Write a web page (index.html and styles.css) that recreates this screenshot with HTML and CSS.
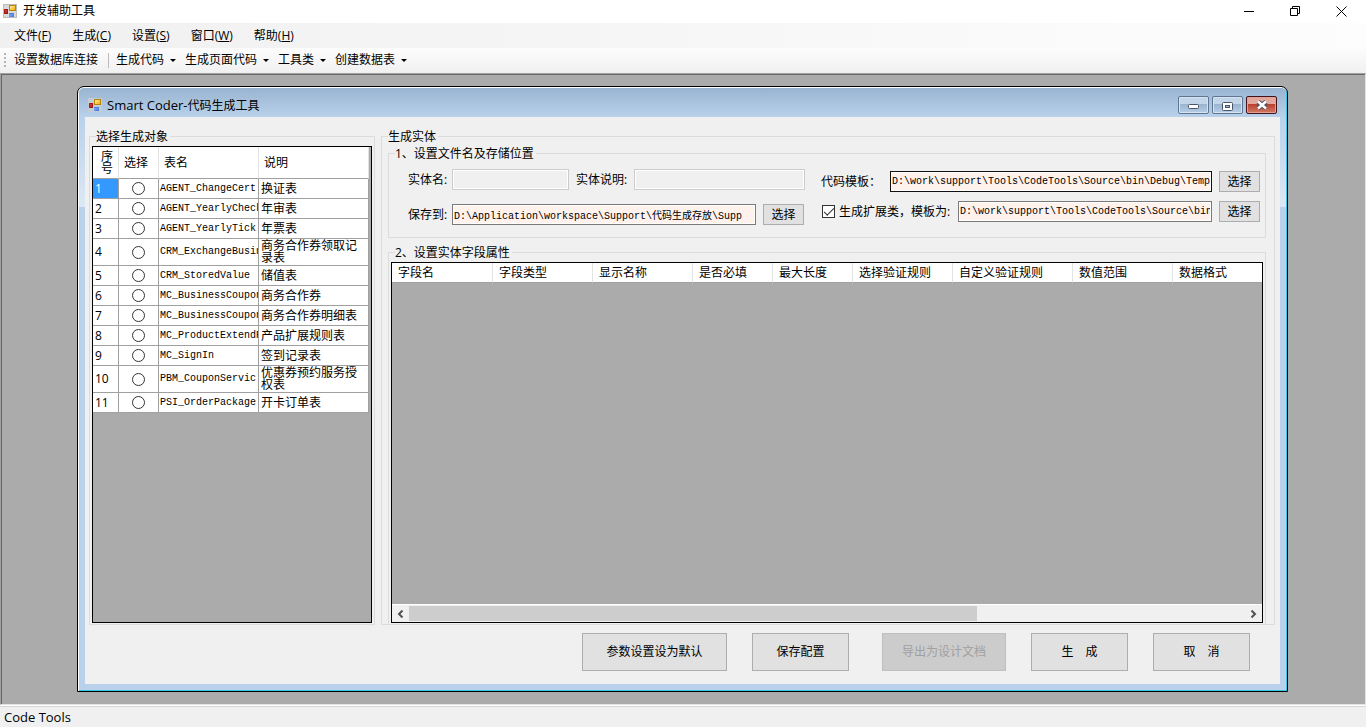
FILE: index.html
```html
<!DOCTYPE html>
<html lang="zh-CN">
<head>
<meta charset="utf-8">
<title>开发辅助工具</title>
<link rel="stylesheet" href="styles.css">
</head>
<body class="app">
<svg class="defs" aria-hidden="true">
  <defs>
    <linearGradient id="gold" x2="1" y2="1"><stop offset="0" stop-color="#fff3a8"/><stop offset="1" stop-color="#f0a800"/></linearGradient>
    <linearGradient id="red" x2="1" y2="1"><stop offset="0" stop-color="#e8554a"/><stop offset="1" stop-color="#a30e0e"/></linearGradient>
    <linearGradient id="blue" x2="1" y2="1"><stop offset="0" stop-color="#8cb8ff"/><stop offset="1" stop-color="#3a74d8"/></linearGradient>
    <symbol id="form-icon" viewBox="0 0 14 14">
      <rect x="1" y="5" width="4" height="5" fill="url(#red)"/>
      <path d="M1.500 5.500h3v4h-3z" fill="none" stroke="#a01818"/>
      <rect x="6.500" y="1.500" width="6" height="5" fill="url(#gold)" stroke="#b98208"/>
      <rect x="6" y="9" width="5" height="4" fill="url(#blue)"/>
      <path d="M6 9.500h5" stroke="#4a7fd6"/>
    </symbol>
  </defs>
</svg>

<header class="titlebar">
  <svg class="form-icon form-icon-boxed"><use href="#form-icon"/></svg>
  <h1 class="titlebar-text">开发辅助工具</h1>
  <div class="caption-buttons">
    <button class="caption-button" aria-label="最小化"><svg width="11" height="11" viewBox="0 0 11 11"><path d="M0 5.5h10" stroke="#000"/></svg></button>
    <button class="caption-button" aria-label="还原"><svg width="11" height="11" viewBox="0 0 11 11" fill="none" stroke="#000"><path d="M.5 2.5h7v7h-7z M2.5 2.5v-2h7v7h-2"/></svg></button>
    <button class="caption-button" aria-label="关闭"><svg width="11" height="11" viewBox="0 0 11 11"><path d="M.5.5l10 10M10.5.5l-10 10" stroke="#000"/></svg></button>
  </div>
</header>

<nav class="menubar">
  <button class="menu-item">文件(<u>F</u>)</button>
  <button class="menu-item">生成(<u>C</u>)</button>
  <button class="menu-item">设置(<u>S</u>)</button>
  <button class="menu-item">窗口(<u>W</u>)</button>
  <button class="menu-item">帮助(<u>H</u>)</button>
</nav>

<div class="toolbar">
  <span class="grip"></span>
  <button class="tool">设置数据库连接</button>
  <span class="tool-separator"></span>
  <button class="tool">生成代码<span class="caret"></span></button>
  <button class="tool">生成页面代码<span class="caret"></span></button>
  <button class="tool">工具类<span class="caret"></span></button>
  <button class="tool">创建数据表<span class="caret"></span></button>
</div>

<main class="mdi">
  <section class="window">
    <header class="window-title">
      <svg class="form-icon"><use href="#form-icon"/></svg>
      <h2 class="window-text"><span class="latin">Smart Coder-</span>代码生成工具</h2>
      <div class="glass-buttons">
        <button class="glass-button" aria-label="最小化"><svg width="11" height="5" viewBox="0 0 11 5"><rect x=".5" y=".5" width="10" height="4" rx="1" fill="#fff" stroke="#4a5468"/></svg></button>
        <button class="glass-button" aria-label="最大化"><svg width="11" height="9" viewBox="0 0 11 9"><rect x=".5" y=".5" width="10" height="8" rx="1" fill="#fff" stroke="#4a5468"/><rect x="3.5" y="3.5" width="4" height="2" fill="#9db5cf" stroke="#4a5468"/></svg></button>
        <button class="glass-button glass-close" aria-label="关闭"><svg width="12" height="10" viewBox="0 0 12 10"><path d="M2 2l8 6M10 2l-8 6" stroke="#4a5468" stroke-width="5"/><path d="M2 1.500l8 7M10 1.500l-8 7" stroke="#fff" stroke-width="2.500"/></svg></button>
      </div>
    </header>

    <div class="window-body">
      <div class="panes">
        <fieldset class="group source-group">
          <legend>选择生成对象</legend>
          <div class="grid-view">
            <table class="object-table">
              <colgroup><col class="col-no"><col class="col-pick"><col class="col-name"><col class="col-desc"></colgroup>
              <thead><tr><th class="no-head">序号</th><th>选择</th><th>表名</th><th>说明</th></tr></thead>
              <tbody>
                <tr><td class="selected">1</td><td class="pick"><input type="radio" name="obj" aria-label="换证表"></td><td class="code">AGENT_ChangeCert</td><td>换证表</td></tr>
                <tr><td>2</td><td class="pick"><input type="radio" name="obj" aria-label="年审表"></td><td class="code">AGENT_YearlyCheck</td><td>年审表</td></tr>
                <tr><td>3</td><td class="pick"><input type="radio" name="obj" aria-label="年票表"></td><td class="code">AGENT_YearlyTick</td><td>年票表</td></tr>
                <tr class="tall"><td>4</td><td class="pick"><input type="radio" name="obj" aria-label="商务合作券领取记录表"></td><td class="code">CRM_ExchangeBusin</td><td>商务合作券领取记录表</td></tr>
                <tr><td>5</td><td class="pick"><input type="radio" name="obj" aria-label="储值表"></td><td class="code">CRM_StoredValue</td><td>储值表</td></tr>
                <tr><td>6</td><td class="pick"><input type="radio" name="obj" aria-label="商务合作券"></td><td class="code">MC_BusinessCoupon</td><td>商务合作券</td></tr>
                <tr><td>7</td><td class="pick"><input type="radio" name="obj" aria-label="商务合作券明细表"></td><td class="code">MC_BusinessCoupon</td><td>商务合作券明细表</td></tr>
                <tr><td>8</td><td class="pick"><input type="radio" name="obj" aria-label="产品扩展规则表"></td><td class="code">MC_ProductExtendR</td><td>产品扩展规则表</td></tr>
                <tr><td>9</td><td class="pick"><input type="radio" name="obj" aria-label="签到记录表"></td><td class="code">MC_SignIn</td><td>签到记录表</td></tr>
                <tr class="tall"><td>10</td><td class="pick"><input type="radio" name="obj" aria-label="优惠券预约服务授权表"></td><td class="code">PBM_CouponServic</td><td>优惠券预约服务授权表</td></tr>
                <tr><td>11</td><td class="pick"><input type="radio" name="obj" aria-label="开卡订单表"></td><td class="code">PSI_OrderPackage</td><td>开卡订单表</td></tr>
              </tbody>
            </table>
          </div>
        </fieldset>

        <fieldset class="group entity-group">
          <legend>生成实体</legend>
          <fieldset class="group file-group">
            <legend>1、设置文件名及存储位置</legend>
            <div class="file-columns">
              <div class="file-left">
                <div class="field-row">
                  <label class="short-label" for="entity">实体名:</label>
                  <input class="text-box entity-box" id="entity" type="text" disabled>
                  <label class="desc-label" for="entity-desc">实体说明:</label>
                  <input class="text-box fill" id="entity-desc" type="text" disabled>
                </div>
                <div class="field-row">
                  <label class="short-label" for="save">保存到:</label>
                  <input class="text-box fill" id="save" type="text" value="D:\Application\workspace\Support\代码生成存放\Supp">
                  <button class="button pick-button">选择</button>
                </div>
              </div>
              <div class="file-right">
                <div class="field-row">
                  <label class="template-label" for="template">代码模板：</label>
                  <input class="text-box fill active" id="template" type="text" value="D:\work\support\Tools\CodeTools\Source\bin\Debug\Temp">
                  <button class="button pick-button">选择</button>
                </div>
                <div class="field-row">
                  <label class="check-label"><input class="check" type="checkbox" checked>生成扩展类，模板为:</label>
                  <input class="text-box fill" type="text" aria-label="扩展类模板" value="D:\work\support\Tools\CodeTools\Source\bin">
                  <button class="button pick-button">选择</button>
                </div>
              </div>
            </div>
          </fieldset>

          <fieldset class="group fields-group">
            <legend>2、设置实体字段属性</legend>
            <div class="grid-view">
              <div class="fields-scroll">
                <table class="fields-table">
                  <colgroup><col class="w101"><col class="w100"><col class="w100"><col class="w80"><col class="w80"><col class="w100"><col class="w120"><col class="w100"><col></colgroup>
                  <thead><tr><th>字段名</th><th>字段类型</th><th>显示名称</th><th>是否必填</th><th>最大长度</th><th>选择验证规则</th><th>自定义验证规则</th><th>数值范围</th><th>数据格式</th></tr></thead>
                </table>
              </div>
              <div class="scrollbar">
                <button class="scroll-button" aria-label="向左滚动"><svg width="7" height="8" viewBox="0 0 7 8"><path d="M5.5 .5L2 4l3.500 3.500" fill="none" stroke="#505050" stroke-width="2"/></svg></button>
                <div class="scroll-track"><div class="scroll-thumb"></div></div>
                <button class="scroll-button" aria-label="向右滚动"><svg width="7" height="8" viewBox="0 0 7 8"><path d="M1.500 .5L5 4 1.500 7.500" fill="none" stroke="#505050" stroke-width="2"/></svg></button>
              </div>
            </div>
          </fieldset>
        </fieldset>
      </div>

      <footer class="actions">
        <button class="button action wide">参数设置设为默认</button>
        <button class="button action">保存配置</button>
        <button class="button action export" disabled>导出为设计文档</button>
        <button class="button action">生　成</button>
        <button class="button action">取　消</button>
      </footer>
    </div>
  </section>
</main>

<footer class="statusbar">Code Tools</footer>
</body>
</html>
```
FILE: styles.css
```css
* { box-sizing: border-box; }

.app {
  margin: 0;
  height: 100vh;
  display: flex;
  flex-direction: column;
  overflow: hidden;
  background: #f0f0f0;
  color: #000;
  font: 12px/16px "Open Sans", "Noto Sans CJK SC", sans-serif;
}

.defs { position: absolute; width: 0; height: 0; }

button, input {
  font: inherit;
  color: inherit;
  margin: 0;
  padding: 0;
  border: 0;
  border-radius: 0;
  background: none;
}

/* Main window chrome */
.titlebar {
  display: flex;
  align-items: center;
  height: 23px;
  padding: 0 2px 1px 3px;
  background: #fff;
}
.form-icon { width: 14px; height: 14px; flex: none; background: #c3cbd4; }
.form-icon-boxed { background: #d9d9d9; outline: 1px solid #bdbdbd; outline-offset: -1px; }
.titlebar-text { flex: 1; margin: 0 0 0 6px; font-size: 12px; font-weight: 400; }
.caption-buttons { display: flex; }
.caption-button { width: 46px; height: 20px; display: grid; place-items: center; }

.menubar {
  display: flex;
  gap: 21px;
  height: 25px;
  padding-left: 14px;
  background: linear-gradient(90deg, #f0f0f0, #fdfdfd);
}

.toolbar {
  display: flex;
  align-items: center;
  height: 25px;
  padding: 0 0 1px 4px;
  background: linear-gradient(#fdfdfd, #f0f0f0);
}
.grip {
  width: 2px;
  height: 14px;
  margin-right: 8px;
  background: repeating-linear-gradient(#b4b4b4 0 2px, transparent 2px 4px);
}
.tool { display: flex; align-items: center; margin-right: 9px; }
.tool-separator { width: 1px; height: 15px; margin: 0 7px 0 1px; background: #bdbdbd; }
.caret {
  margin-left: 6px;
  border: 3px solid transparent;
  border-top-color: #000;
  border-bottom: 0;
}

.mdi {
  position: relative;
  flex: 1;
  min-height: 0;
  border: 1px solid #a0a0a0;
  border-right-color: #e3e3e3;
  border-bottom-color: #e3e3e3;
  background: #ababab;
  box-shadow: inset 1px 1px #696969;
}
.statusbar {
  height: 22px;
  padding: 3px 4px 0;
  border-top: 1px solid #fff;
  box-shadow: inset 0 1px #d7d7d7;
  font-size: 13px;
}

/* Child window */
.window {
  position: absolute;
  inset: 12px 77px 12px 76px;
  display: flex;
  flex-direction: column;
  padding: 1px;
  border: 1px solid #000;
  border-radius: 7px 7px 0 0;
  background:
    linear-gradient(#b9d1ea, #dce8f5) 0 30px / 100% 90px no-repeat,
    #b9d1ea;
  box-shadow: inset 1px 1px #fff, inset -1px -1px #35c8e8;
}
.window-title {
  display: flex;
  align-items: center;
  height: 29px;
  padding: 5px 9px 0 9px;
  border-radius: 5px 5px 0 0;
  background: linear-gradient(#99b4d1, #b9d1ea);
}
.window-text { flex: 1; margin: 0 0 0 5px; font-size: 12px; font-weight: 400; }
.latin { font-size: 13px; }
.glass-buttons { display: flex; gap: 3px; }
.glass-button {
  width: 31px;
  height: 18px;
  display: grid;
  place-items: center;
  padding-top: 2px;
  border: 1px solid #5f7590;
  border-radius: 2px;
  background: linear-gradient(#c3d6e9 45%, #9ab4cf 45%, #b6cfe6);
  box-shadow: inset 0 0 0 1px #d5e4f2;
}
.glass-close {
  padding-top: 0;
  border-color: #43141c;
  background: linear-gradient(#e3a79c 45%, #b9402c 45%, #d27b66);
  box-shadow: inset 0 0 0 1px #e0a297;
}

.window-body {
  flex: 1;
  min-height: 0;
  display: flex;
  flex-direction: column;
  margin: 0 6px 6px;
  padding: 11px 5px 0 4px;
  background: #f0f0f0;
}
.panes { flex: 1; min-height: 0; display: flex; gap: 6px; }

.group {
  display: flex;
  flex-direction: column;
  min-width: 0;
  min-height: 0;
  margin: 0;
  padding: 1px 2px;
  border: 1px solid #dcdcdc;
}
.group > legend { margin-left: 4px; padding: 0 2px 0 0; line-height: 17px; }
.source-group { flex: 0 0 286px; }
.entity-group { flex: 1; padding: 0 8px 0 6px; }
.entity-group > legend { margin-left: 0; }
.file-group { flex: none; padding: 0 5px 12px 19px; }
.file-group > legend { margin-left: -13px; }
.fields-group { flex: 1; margin-top: 6px; border-bottom: 0; }

.grid-view {
  flex: 1;
  min-height: 0;
  display: flex;
  flex-direction: column;
  border: 1px solid #000;
  background: #ababab;
}

table { border-collapse: separate; border-spacing: 0; table-layout: fixed; }
th, td { padding: 0; text-align: left; font-weight: 400; overflow: hidden; }
th {
  padding-left: 6px;
  background: #fff;
  border-right: 1px solid #e3e3e3;
  border-bottom: 1px solid #a0a0a0;
}

.object-table { width: 276px; line-height: 12px; }
.col-no { width: 26px; }
.col-pick { width: 40px; }
.col-name { width: 100px; }
.col-desc { width: 110px; }
.object-table th { height: 32px; padding-left: 5px; }
.object-table .no-head { padding: 0 5px 0 8px; }
.object-table td {
  height: 20px;
  padding: 0 2px;
  background: #fff;
  border-right: 1px solid #a0a0a0;
  border-bottom: 1px solid #a0a0a0;
}
.object-table .tall td { height: 27px; }
.object-table .selected { background: #3399ff; color: #fff; }
.object-table .code {
  padding: 0 0 0 1px;
  font: 10px/12px "Liberation Mono", monospace;
  white-space: nowrap;
}
.object-table .pick { padding: 0; }
.pick input {
  appearance: none;
  display: block;
  width: 13px;
  height: 13px;
  margin: 0 auto;
  border: 1px solid #333;
  border-radius: 50%;
  background: #fff;
}

/* File settings */
.file-columns { display: flex; align-items: flex-start; gap: 16px; }
.file-left { flex: 0 0 397px; display: grid; gap: 14px; padding-top: 7px; }
.file-right { flex: 1; min-width: 0; display: grid; gap: 9px; padding-top: 9px; }
.field-row { display: flex; align-items: center; height: 21px; white-space: nowrap; }
.short-label { width: 44px; }
.desc-label { width: 58px; margin-left: 7px; }
.template-label { width: 69px; }
.check-label { display: flex; align-items: center; gap: 4px; width: 137px; }
.check {
  appearance: none;
  width: 13px;
  height: 13px;
  margin-left: 1px;
  border: 1px solid #333;
  background: #fff;
  display: grid;
  place-items: center;
}
.check:checked::before {
  content: "";
  width: 9px;
  height: 4px;
  border: solid #333;
  border-width: 0 0 1px 1px;
  transform: translateY(-1px) rotate(-45deg);
}
.text-box {
  height: 21px;
  min-width: 0;
  padding: 0 1px;
  border: 1px solid #7a7a7a;
  outline: 0;
  background: #fff2ec;
  box-shadow: inset 0 0 0 1px #fff;
  font: 10px/16px "Liberation Mono", "Noto Sans CJK SC", monospace;
}
.text-box:disabled { border-color: #ccc; background: #f0f0f0; }
.text-box.active { border-color: #111; }
.entity-box { width: 117px; }
.fill { flex: 1; }

.button { border: 1px solid #adadad; background: #e1e1e1; text-align: center; }
.button:disabled { border-color: #bfbfbf; background: #ccc; color: #a0a0a0; }
.pick-button { flex: none; width: 41px; height: 21px; margin-left: 7px; line-height: 16px; }
.file-left .pick-button { margin-right: 1px; }

/* Field grid */
.fields-scroll { flex: 1; min-height: 0; overflow: hidden; }
.fields-table { width: 100%; }
.fields-table th { height: 20px; }
.fields-table th:last-child { border-right: 0; }
.w80 { width: 80px; }
.w100 { width: 100px; }
.w101 { width: 101px; }
.w120 { width: 120px; }
.scrollbar { display: flex; height: 18px; border-top: 1px solid #fff; background: #f0f0f0; }
.scroll-button { width: 17px; display: grid; place-items: center; }
.scroll-track { flex: 1; display: flex; padding: 1px 0; }
.scroll-thumb { width: 68%; background: #cdcdcd; }

.actions { display: flex; justify-content: flex-end; gap: 25px; padding: 8px 25px 13px 0; }
.action { width: 97px; height: 38px; }
.action.wide { width: 145px; }
.action.export { width: 124px; margin-left: 8px; }
```
